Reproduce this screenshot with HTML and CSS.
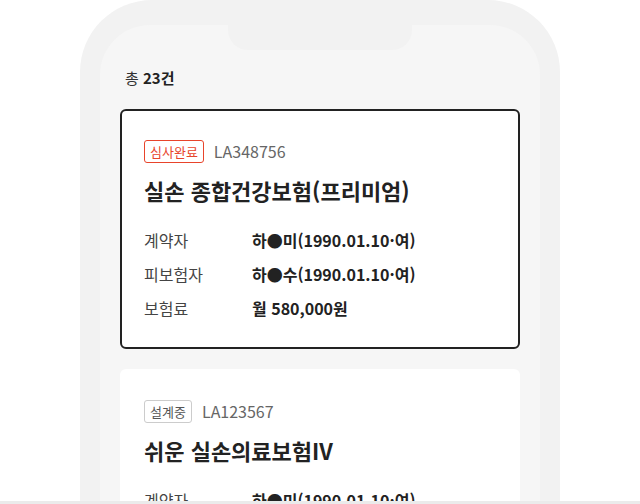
FILE: index.html
```html
<!DOCTYPE html>
<html lang="ko">
<head>
    <meta charset="UTF-8">
    <meta name="viewport" content="width=device-width, initial-scale=1.0">
    <title>계약 목록</title>
    <link rel="stylesheet" href="styles.css">
</head>
<body>
    <div class="phone">
        <div class="screen">
            <div class="notch"></div>
            <div class="total">총 <strong>23건</strong></div>

            <div class="card selected">
                <div class="card-head">
                    <span class="badge done">심사완료</span>
                    <span class="contract-no">LA348756</span>
                </div>
                <h2 class="card-title">실손 종합건강보험(프리미엄)</h2>
                <dl class="info">
                    <div class="info-row"><dt>계약자</dt><dd>하●미(1990.01.10·여)</dd></div>
                    <div class="info-row"><dt>피보험자</dt><dd>하●수(1990.01.10·여)</dd></div>
                    <div class="info-row"><dt>보험료</dt><dd>월 580,000원</dd></div>
                </dl>
            </div>

            <div class="card">
                <div class="card-head">
                    <span class="badge draft">설계중</span>
                    <span class="contract-no">LA123567</span>
                </div>
                <h2 class="card-title">쉬운 실손의료보험IV</h2>
                <dl class="info">
                    <div class="info-row"><dt>계약자</dt><dd>하●미(1990.01.10·여)</dd></div>
                    <div class="info-row"><dt>피보험자</dt><dd>하●수(1990.01.10·여)</dd></div>
                    <div class="info-row"><dt>보험료</dt><dd>월 120,000원</dd></div>
                </dl>
            </div>
        </div>
    </div>
    <div class="bottom-bar"></div>
</body>
</html>
```

FILE: styles.css
```css
body {
    margin: 0;
    background-color: #fff;
    font-family: "Noto Sans CJK KR", "Noto Sans", sans-serif;
    color: #222;
}
.phone {
    width: 480px;
    height: 501px;
    margin: 0 auto;
    padding: 25px 20px 0;
    box-sizing: border-box;
    background-color: #f2f2f2;
    border-radius: 72px 72px 0 0;
    overflow: hidden;
}
.screen {
    position: relative;
    height: 100%;
    padding: 0 20px;
    background-color: #f6f6f6;
    border-radius: 50px 50px 0 0;
}
.notch {
    position: absolute;
    top: 0;
    left: 128px;
    width: 184px;
    height: 25px;
    background-color: #f2f2f2;
    border-radius: 0 0 20px 20px;
}
.total {
    padding: 42px 0 0 5px;
    font-size: 15px;
    line-height: 22px;
    color: #333;
}
.total strong {
    font-weight: 700;
    color: #222;
}
.card {
    margin-top: 20px;
    padding: 30px 24px 29px;
    background-color: #fff;
    border-radius: 6px;
}
.card.selected {
    padding: 28px 22px 27px;
    border: 2px solid #222;
}
.card-head {
    display: flex;
    align-items: center;
    gap: 10px;
}
.badge {
    padding: 0 5px;
    font-size: 13px;
    line-height: 21px;
    border: 1px solid;
    border-radius: 3px;
}
.badge.done {
    color: #e8442b;
    border-color: #e8442b;
}
.badge.draft {
    color: #555;
    border-color: #ccc;
}
.contract-no {
    font-size: 16px;
    color: #666;
}
.card-title {
    margin: 12px 0 0;
    font-size: 22px;
    line-height: 30px;
    font-weight: 700;
    color: #222;
}
.info {
    display: flex;
    flex-direction: column;
    gap: 10px;
    margin: 23px 0 0;
}
.info-row {
    display: flex;
    font-size: 16px;
    line-height: 24px;
}
.info-row dt {
    width: 108px;
    color: #444;
}
.info-row dd {
    margin: 0;
    font-weight: 700;
    color: #222;
}
.bottom-bar {
    height: 20px;
    background-color: #ebebeb;
}
```
